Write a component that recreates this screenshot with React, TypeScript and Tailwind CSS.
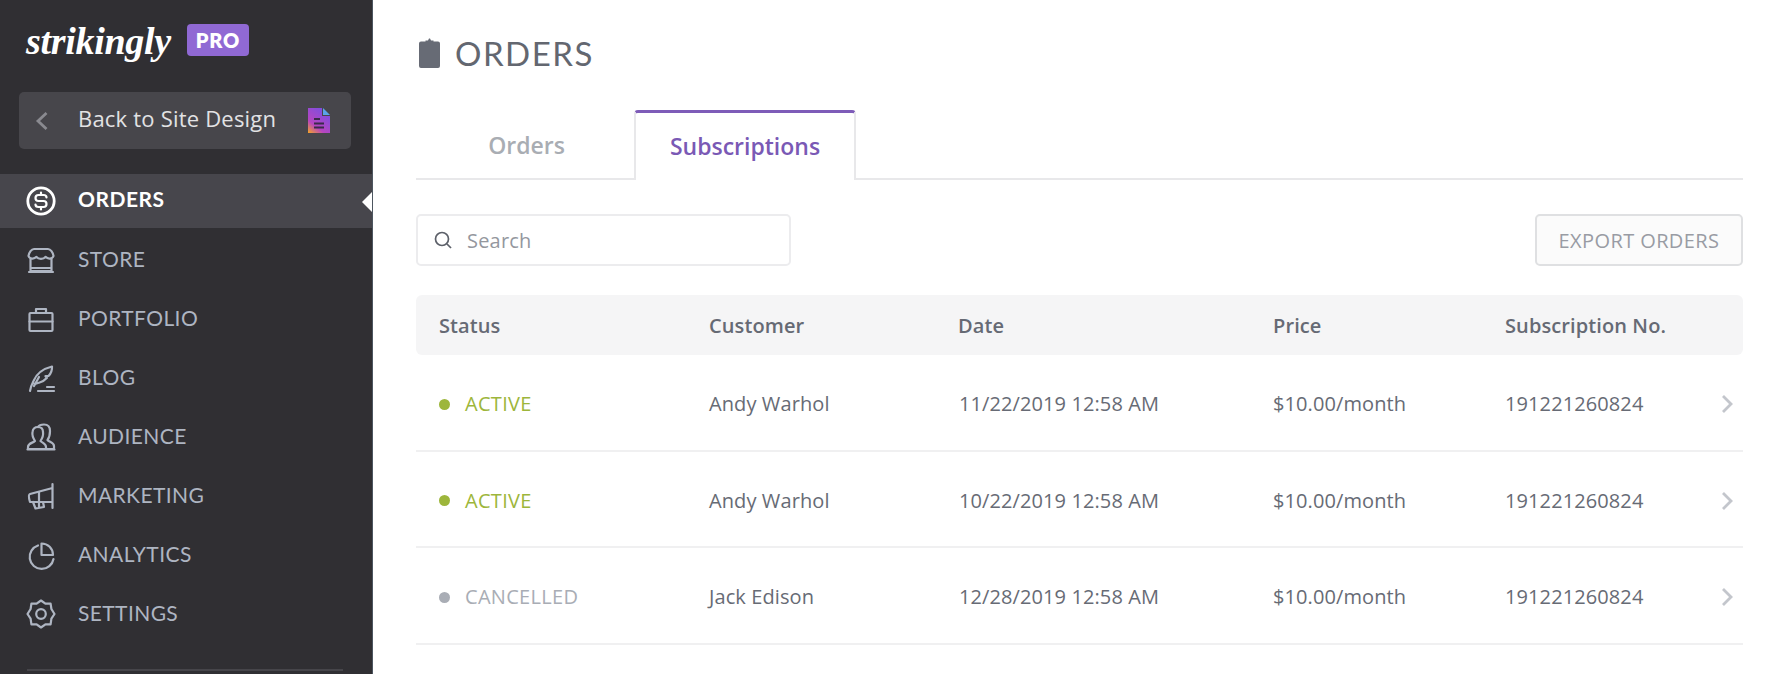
import React from "react";

const navStroke = { fill: "none", stroke: "currentColor", strokeWidth: 2.2, strokeLinejoin: "round" as const, strokeLinecap: "round" as const };

function Ico({ children }: { children: React.ReactNode }) {
  return (
    <svg viewBox="0 0 32 32" className="w-8 h-8 shrink-0" {...navStroke}>
      {children}
    </svg>
  );
}

const icons: Record<string, React.ReactNode> = {
  ORDERS: (
    <svg viewBox="0 0 32 32" className="w-8 h-8 shrink-0" {...navStroke} strokeWidth={2.8}>
      <circle cx="16" cy="16" r="13.2" />
      <path strokeWidth={2.2} d="M21.500 12.500c0-1.500-1.200-2.500-3-2.500h-5c-1.800 0-3 1.200-3 3s1.200 3 3 3h5c1.800 0 3 1.200 3 3s-1.200 3-3 3h-5c-1.800 0-3-1-3-2.500M16 7.500V10M16 22v2.500" />
    </svg>
  ),
  STORE: (
    <Ico>
      <path d="M9 5h14c2.500 0 5 3.500 5.500 7-1 3-5.500 3.500-8 .8-2 2.700-7 2.700-9 0-2.500 2.700-7 2.200-8-.8C4 8.500 6.500 5 9 5z" />
      <path d="M5.500 15v12h21V15M4 28h24M6 24h20" />
    </Ico>
  ),
  PORTFOLIO: (
    <Ico>
      <rect x="4.500" y="10" width="23" height="18" rx="1" />
      <path d="M11 10V6h10v4M4.500 18.500h23" />
    </Ico>
  ),
  BLOG: (
    <Ico>
      <path d="M5 29c.6-4 2-7 3.500-10C11 13 17 7 27 4.500c.2 3.500-1 7-3.500 9.500l-3 .2 1.500 1.500c-2 2.300-4 4-8 5-2 .5-3.500 1-4.500 1.200" />
      <path d="M13 29h16M22 25h7M9 24l5-9" />
    </Ico>
  ),
  AUDIENCE: (
    <Ico>
      <path d="M3 28v-2c0-4 5-4 7-6-2-3-3-6-2.500-9C8 7 11 6 13 6c3 0 5 2 5 5 .5 3-.5 6-2.500 9 2 2 5.500 2.500 5.500 6v2z" />
      <path d="M13 6c1-2 4-2.500 6-2.500 4 0 6 2.500 6 6.500 0 4-1 7-2.500 9 1.500 2 6.500 2.500 6.500 6v3h-8M2.500 28.500h27" />
    </Ico>
  ),
  MARKETING: (
    <Ico>
      <path d="M27.500 4v24M27.500 8 5 14c-1.500.5-1.500 3 0 8h22.500" />
      <path d="M14 12v15M8 22l2.500 6.500L19 27l-1-5" />
    </Ico>
  ),
  ANALYTICS: (
    <Ico>
      <path d="M13 6.500A12 12 0 1 0 28.500 20" />
      <path d="M16.500 4.500V16H28C28 9.500 23 4.500 16.500 4.500z" />
    </Ico>
  ),
  SETTINGS: (
    <Ico>
      <path d="M16 2.500l4.400 3.200 5.200-.1.800 5.400L29.500 16l-3.100 4.600-.8 5.800-5.200-.1L16 29.500l-4.400-3.200-5.200.1-.8-5.800L2.500 16l3.100-5 .8-5.400 5.200.1z" />
      <circle cx="16" cy="16" r="4.800" />
    </Ico>
  ),
};

const nav = ["STORE", "PORTFOLIO", "BLOG", "AUDIENCE", "MARKETING", "ANALYTICS", "SETTINGS"];

const rows = [
  { status: "ACTIVE", on: true, name: "Andy Warhol", date: "11/22/2019 12:58 AM" },
  { status: "ACTIVE", on: true, name: "Andy Warhol", date: "10/22/2019 12:58 AM" },
  { status: "CANCELLED", on: false, name: "Jack Edison", date: "12/28/2019 12:58 AM" },
];

function Sidebar() {
  return (
    <aside className="w-[373px] h-full shrink-0 bg-[#302f33] border-r border-[#4d5660] overflow-hidden font-['Lato',sans-serif]">
      <div className="h-[92px] pl-[26px] pt-[17px] flex items-start">
        <span className="w-[147px] font-['Liberation_Serif',serif] italic font-bold text-[38px] leading-[48px] tracking-[-0.3px] text-white">strikingly</span>
        <span className="ml-[14px] mt-[7px] w-[62px] h-[32px] rounded-[4px] bg-[#9069d4] text-white font-extrabold text-[20px] tracking-[0.8px] flex items-center justify-center">PRO</span>
      </div>
      <div className="ml-[19px] w-[332px] h-[57px] rounded-[5px] bg-[#47464b] flex items-center pl-[16px] pr-[21px]">
        <svg viewBox="0 0 14 20" className="w-[14px] h-[20px] text-[#8a8a90]" fill="none" stroke="currentColor" strokeWidth="2.800">
          <path d="M11.500 2 3 10l8.500 8" />
        </svg>
        <span className="ml-[29px] pb-[4px] flex-1 font-['Open_Sans',sans-serif] text-[22px] tracking-[0.2px] text-[#e2e2e4]">Back to Site Design</span>
        <svg viewBox="0 0 22 25" className="w-[22px] h-[25px]">
          <defs>
            <linearGradient id="doc" x1="0" y1="1" x2="0.7" y2="0">
              <stop offset="0" stopColor="#f5a623" />
              <stop offset="0.35" stopColor="#b745c0" />
              <stop offset="1" stopColor="#7a4fe0" />
            </linearGradient>
          </defs>
          <path d="M0 0h14v8h8v17H0z" fill="url(#doc)" />
          <path d="M15 0l7 7h-7z" fill="#5aa3e8" />
          <path d="M6 11h6M6 15.500h10M6 19.500h10" stroke="#3a2b4a" strokeWidth="2" />
        </svg>
      </div>
      <div className="relative mt-[25px] h-[54px] bg-[#47464c] flex items-center pl-[25px] text-white font-bold text-[21px] tracking-[0.5px]">
        {icons.ORDERS}
        <span className="ml-[21px] pb-[4px]">ORDERS</span>
        <span className="absolute right-0 top-[18px] w-0 h-0 border-y-[10px] border-y-transparent border-r-[10px] border-r-white" />
      </div>
      <nav className="mt-[2px] text-[#aeb5c2] text-[21px] tracking-[0.4px]">
        {nav.map((n) => (
          <div key={n} className="h-[59px] flex items-center pl-[25px]">
            {icons[n]}
            <span className="ml-[21px] pb-[2px]">{n}</span>
          </div>
        ))}
      </nav>
      <div className="ml-[27px] w-[316px] mt-[26px] h-[2px] bg-[#46454a]" />
    </aside>
  );
}

function Row({ r }: { r: (typeof rows)[number] }) {
  return (
    <div className="h-[96.500px] pt-[4px] flex items-center pl-[23px] border-b-2 border-[#f0f0f1] text-[20px] tracking-[0.1px] text-[#676b75]">
      <div className="w-[270px] flex items-center">
        <span className={`w-[11px] h-[11px] rounded-full ${r.on ? "bg-[#9db63b]" : "bg-[#a9adb5]"}`} />
        <span className={`ml-[15px] font-medium tracking-[0.3px] ${r.on ? "text-[#9db63b]" : "text-[#a9adb5]"}`}>{r.status}</span>
      </div>
      <div className="w-[250px]">{r.name}</div>
      <div className="w-[314px]">{r.date}</div>
      <div className="w-[232px]">$10.00/month</div>
      <div className="flex-1">191221260824</div>
      <svg viewBox="0 0 12 20" className="w-[12px] h-[20px] mr-[10px] text-[#c3c6cc]" fill="none" stroke="currentColor" strokeWidth="2.800">
        <path d="M2 2l8 8-8 8" />
      </svg>
    </div>
  );
}

function Main() {
  return (
    <main className="flex-1 min-w-0 pl-[43px] pr-[39px] font-['Open_Sans',sans-serif]">
      <div className="h-[110px] pt-[37px] flex items-start">
        <svg viewBox="0 0 21 30" className="w-[21px] h-[30px] ml-[3px] mt-[1px] text-[#676b75]">
          <path fill="currentColor" d="M2 3.500h4.500v-1h2.500L10 .5h1l1 2h2.500v1H19a2 2 0 0 1 2 2V28a2 2 0 0 1-2 2H2a2 2 0 0 1-2-2V5.500a2 2 0 0 1 2-2z" />
        </svg>
        <h1 className="ml-[15px] font-['Lato',sans-serif] text-[33px] leading-[32px] tracking-[1.500px] text-[#636770]">ORDERS</h1>
      </div>
      <div className="h-[70px] flex border-b-2 border-[#e8e8ea] text-[23px] font-semibold">
        <div className="w-[219px] pt-[2px] pl-[2px] flex items-center justify-center text-[#a9adb3]">Orders</div>
        <div className="w-[222px] h-[70px] -ml-[1px] pb-[1px] flex items-center justify-center bg-white rounded-t-[4px] border-x-2 border-[#e8e8ea] border-t-[3px] border-t-[#7e5cb8] text-[#7a59b5]">Subscriptions</div>
      </div>
      <div className="mt-[34px] flex justify-between">
        <div className="w-[375px] h-[52px] rounded-[5px] border-2 border-[#ececee] flex items-center pl-[16px]">
          <svg viewBox="0 0 18 18" className="w-[18px] h-[18px] text-[#5c6069]" fill="none" stroke="currentColor" strokeWidth="1.700">
            <circle cx="8" cy="8" r="6.500" />
            <path d="M13 13l4 4" />
          </svg>
          <span className="ml-[15px] pt-[2px] text-[20px] tracking-[0.2px] text-[#94979e]">Search</span>
        </div>
        <div className="w-[208px] h-[52px] pt-[2px] rounded-[5px] border-2 border-[#dfe0e2] bg-[#fbfbfb] flex items-center justify-center text-[20px] tracking-[0.4px] font-medium text-[#999ca4]">EXPORT ORDERS</div>
      </div>
      <div className="mt-[29px] h-[60px] pt-[2px] rounded-[6px] bg-[#f5f5f6] flex items-center pl-[23px] text-[20px] tracking-[0.1px] font-semibold text-[#666a74]">
        <div className="w-[270px]">Status</div>
        <div className="w-[249px]">Customer</div>
        <div className="w-[315px]">Date</div>
        <div className="w-[232px]">Price</div>
        <div>Subscription No.</div>
      </div>
      {rows.map((r, i) => (
        <Row key={i} r={r} />
      ))}
    </main>
  );
}

export default function App() {
  return (
    <div className="w-[1782px] h-[674px] flex overflow-hidden bg-white">
      <Sidebar />
      <Main />
    </div>
  );
}
